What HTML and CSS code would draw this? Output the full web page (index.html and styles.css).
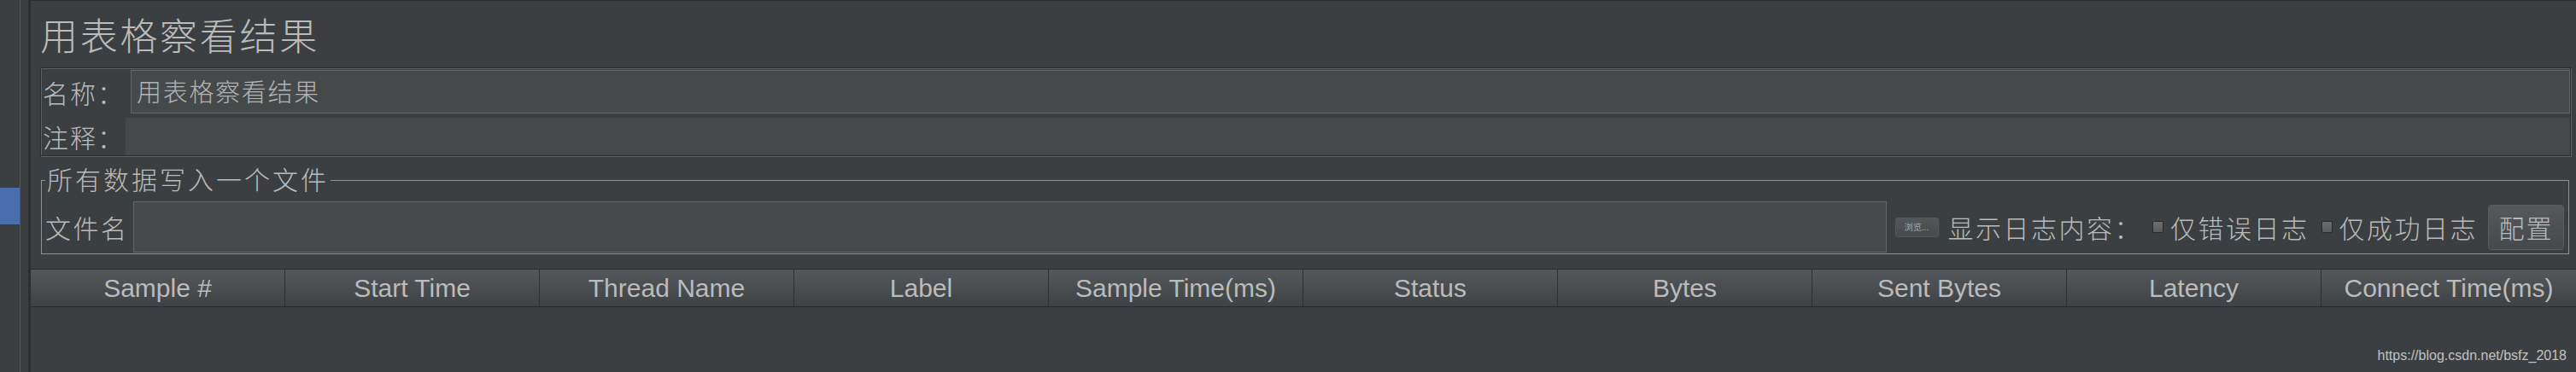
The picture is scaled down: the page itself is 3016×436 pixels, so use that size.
FILE: index.html
```html
<!DOCTYPE html>
<html lang="zh-CN">
<head>
<meta charset="utf-8">
<title>用表格察看结果</title>
<link rel="stylesheet" href="styles.css">
</head>
<body>
<div class="app">
  <aside class="tree"><div class="tree-sel"></div></aside>
  <div class="splitter"></div>
  <main class="main">
    <h1 class="title">用表格察看结果</h1>
    <div class="info">
      <div class="info-row name-row">
        <span class="info-lbl">名称：</span>
        <div class="name-field">用表格察看结果</div>
      </div>
      <div class="info-row comment-row">
        <span class="info-lbl">注释：</span>
        <div class="comment-field"></div>
      </div>
    </div>
    <fieldset class="group">
      <legend class="group-title">所有数据写入一个文件</legend>
      <div class="file-row">
        <span class="row-lbl">文件名</span>
        <div class="file-field"></div>
        <button class="browse">浏览...</button>
        <span class="row-lbl log-lbl">显示日志内容：</span>
        <span class="check check-err"></span>
        <span class="row-lbl opt-lbl">仅错误日志</span>
        <span class="check check-ok"></span>
        <span class="row-lbl opt-lbl">仅成功日志</span>
        <button class="cfg">配置</button>
      </div>
    </fieldset>
    <div class="table">
      <div class="thead">
        <div class="th">Sample #</div>
        <div class="th">Start Time</div>
        <div class="th">Thread Name</div>
        <div class="th">Label</div>
        <div class="th">Sample Time(ms)</div>
        <div class="th">Status</div>
        <div class="th">Bytes</div>
        <div class="th">Sent Bytes</div>
        <div class="th">Latency</div>
        <div class="th">Connect Time(ms)</div>
      </div>
      <div class="tbody">
        <span class="watermark">https://blog.csdn.net/bsfz_2018</span>
      </div>
    </div>
  </main>
</div>
</body>
</html>
```
FILE: styles.css
```css
html, body {
  margin: 0;
  padding: 0;
}
body {
  width: 3016px;
  height: 436px;
  overflow: hidden;
  background: #3c3f41;
  color: #bbbbbb;
  font-family: "Noto Sans CJK SC", "Noto Sans", sans-serif;
}
.app {
  display: flex;
  height: 436px;
}
.tree {
  width: 23px;
  padding-top: 220px;
  border-right: 1px solid #56595b;
  background: #3c3f41;
}
.tree-sel {
  height: 43px;
  background: #4b6eaf;
}
.splitter {
  width: 9px;
  border-right: 3px solid #2d2f31;
  background: #3c3f41;
}
.main {
  flex: 1;
  min-width: 0;
  border-top: 1px solid #2b2b2b;
  display: flex;
  flex-direction: column;
}
.title {
  margin: 9px 0 9px 11px;
  font-size: 44px;
  line-height: 60px;
  letter-spacing: 2.7px;
  font-weight: 300;
  color: #bbbbbb;
}
.info {
  margin: 0 6px 0 11px;
  padding-top: 2px;
  border: 1px solid #2b2d2f;
  box-shadow: inset 1px 1px 0 #5e6163, 1px 1px 0 #5e6163;
  display: flex;
  flex-direction: column;
  gap: 5px;
}
.info-row {
  display: flex;
  align-items: center;
}
.name-row {
  height: 51px;
}
.comment-row {
  height: 44px;
}
.info-lbl {
  width: 96px;
  padding-left: 2px;
  font-size: 30px;
  line-height: 32px;
  letter-spacing: 2px;
  font-weight: 300;
  white-space: nowrap;
}
.name-field {
  flex: 1;
  margin-left: 7px;
  height: 51px;
  box-sizing: border-box;
  border: 1px solid #646464;
  background: #45494a;
  padding-left: 6px;
  font-size: 29px;
  line-height: 47px;
  letter-spacing: 1.7px;
  font-weight: 300;
  color: #b4b4b4;
  white-space: nowrap;
}
.comment-field {
  flex: 1;
  margin-left: 1px;
  height: 44px;
  background: #45494a;
}
.group {
  margin: 10px 8px 0 12px;
  padding: 6px 5px 1px 4px;
  border: 1px solid #8f9193;
  min-width: 0;
}
.group-title {
  padding: 0 2px 5px;
  font-size: 30px;
  line-height: 32px;
  letter-spacing: 3px;
  font-weight: 300;
  white-space: nowrap;
}
.file-row {
  display: flex;
  align-items: center;
  height: 60px;
}
.row-lbl {
  font-size: 30px;
  line-height: 32px;
  letter-spacing: 2.5px;
  font-weight: 300;
  white-space: nowrap;
}
.file-field {
  flex: 1;
  margin-left: 5.5px;
  height: 60px;
  box-sizing: border-box;
  border: 1px solid #646464;
  background: #45494a;
}
.browse {
  margin-left: 10px;
  width: 51px;
  height: 23px;
  padding: 0;
  box-sizing: border-box;
  border: 1px solid #55585a;
  border-radius: 3px;
  background: linear-gradient(#53575a, #474a4d);
  color: #a8a8a8;
  font-family: "Noto Sans CJK SC", sans-serif;
  font-size: 10px;
  line-height: 20px;
}
.log-lbl {
  margin-left: 11px;
}
.check {
  width: 13px;
  height: 14px;
  box-sizing: border-box;
  border: 1px solid #2b2b2b;
  border-radius: 2px;
  background: linear-gradient(#6e6e6e, #5a5a5a);
  flex: none;
}
.check-err {
  margin-left: 12px;
}
.check-ok {
  margin-left: 14px;
}
.opt-lbl {
  margin-left: 8px;
}
.cfg {
  margin-left: 12px;
  width: 89px;
  height: 53px;
  padding: 0;
  box-sizing: border-box;
  border: 1px solid #5a5d5f;
  border-radius: 4px;
  background: linear-gradient(#55595c, #46494b);
  color: #bbbbbb;
  font-family: "Noto Sans CJK SC", sans-serif;
  font-size: 30px;
  font-weight: 300;
  letter-spacing: 2px;
  line-height: 32px;
}
.table {
  margin-top: 17px;
  flex: 1;
  display: flex;
  flex-direction: column;
}
.thead {
  display: grid;
  grid-template-columns: repeat(10, 1fr);
  border-top: 1px solid #2b2b2b;
  border-bottom: 1px solid #2b2b2b;
  background: linear-gradient(#54585b, #3f4245);
}
.th {
  height: 43px;
  line-height: 43px;
  text-align: center;
  font-family: "Liberation Sans", Arial, sans-serif;
  font-size: 30px;
  color: #bbbbbb;
  border-right: 1px solid #2e3032;
  white-space: nowrap;
  overflow: hidden;
}
.th:last-child {
  border-right: none;
}
.tbody {
  flex: 1;
  display: flex;
  justify-content: flex-end;
  align-items: flex-end;
  padding: 0 11px 10px 0;
}
.watermark {
  font-family: "Liberation Sans", Arial, sans-serif;
  font-size: 16px;
  line-height: 18px;
  color: #c2c2c2;
}
```
